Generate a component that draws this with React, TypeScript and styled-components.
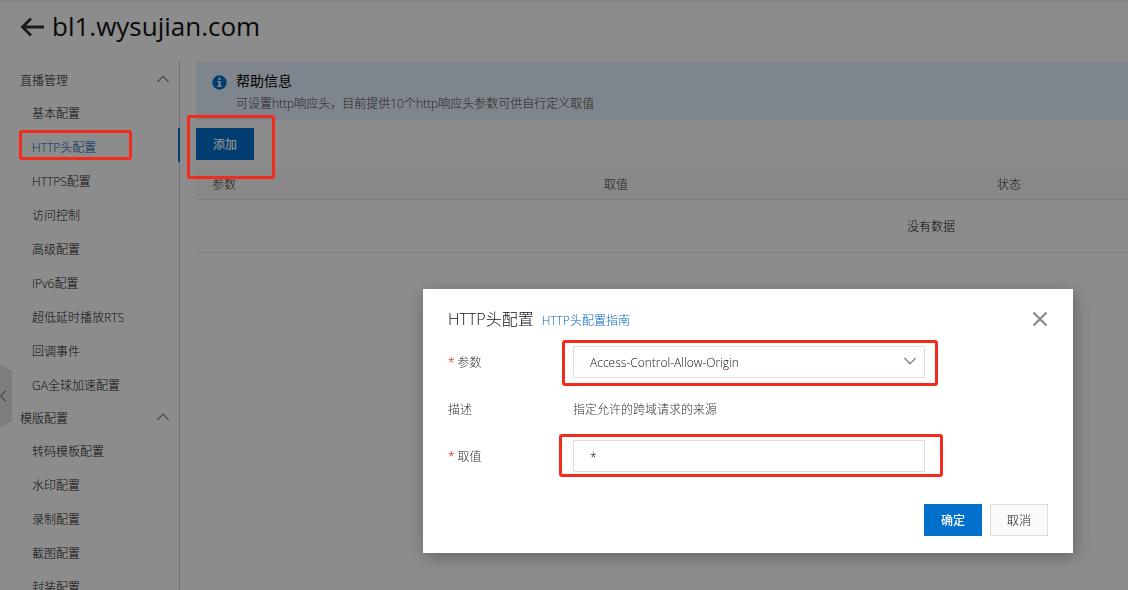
import React from "react";
import styled, { createGlobalStyle, css } from "styled-components";

const GlobalStyle = createGlobalStyle`
  * { box-sizing: border-box; }
  body {
    margin: 0;
    background: #fff;
    color: #111;
    font-family: "Open Sans", "Noto Sans CJK SC", sans-serif;
    font-size: 12px;
    font-weight: 300;
    line-height: 20px;
    overflow: hidden;
  }
  button, input, select { font: inherit; color: inherit; }
`;

const Page = styled.div`
  display: flex;
  flex-direction: column;
  min-height: 100vh;
  border-top: 2px solid #f2f2f2;
`;

const PageHeader = styled.header`
  display: flex;
  align-items: center;
  gap: 8px;
  height: 60px;
  padding: 0 20px 12px;
`;

const BackButton = styled.button`
  display: flex;
  padding: 2px 0 0;
  border: 0;
  background: none;
  color: #333;
`;

const PageTitle = styled.h1`
  margin: 0;
  color: #111;
  font-size: 26px;
  font-weight: 400;
  line-height: 40px;
`;

const Body = styled.div`
  display: flex;
  flex: 1;
`;

const Sidebar = styled.nav`
  flex: 0 0 180px;
  height: calc(100vh - 62px);
  overflow: clip;
  box-shadow: inset -1px 0 #ccc;
`;

const MenuList = styled.ul`
  margin: 0;
  padding: 0;
  list-style: none;
`;

const GroupToggle = styled.button`
  display: flex;
  align-items: center;
  justify-content: space-between;
  width: 100%;
  height: 32px;
  padding: 6px 10px 0 20px;
  border: 0;
  background: none;
  text-align: left;
`;

const MenuItem = styled.li<{ $active?: boolean }>`
  height: 34px;
  padding: 5px 0 0 32px;
  border-right: 2px solid ${(p) => (p.$active ? "#0070cc" : "transparent")};
`;

const MenuLink = styled.a<{ $active?: boolean }>`
  position: relative;
  display: inline-block;
  color: ${(p) => (p.$active ? "#0058b8" : "#111")};
  line-height: 30px;
  text-decoration: none;
`;

const Main = styled.main`
  flex: 1;
  min-width: 0;
  overflow: hidden;
  padding-left: 16px;
`;

const Notice = styled.section`
  display: flex;
  gap: 9px;
  padding: 8px 16px 4px;
  background: #e7f2ff;
  color: #444;
`;

const NoticeIcon = styled.svg`
  flex: none;
  margin-top: 5px;
`;

const NoticeTitle = styled.h2`
  margin: 0;
  color: #000;
  font-size: 14px;
  font-weight: 400;
  line-height: 22px;
`;

const NoticeText = styled.p`
  margin: 0;
  line-height: 24px;
`;

const Toolbar = styled.div`
  display: flex;
  padding: 8px 0;
`;

const Anchor = styled.div`
  position: relative;
  display: flex;
`;

const Button = styled.button<{ $primary?: boolean }>`
  width: 58px;
  height: 32px;
  padding: 2px 0 0;
  border: 1px solid #dedede;
  background: #fafafa;
  ${(p) =>
    p.$primary &&
    css`
      border-color: #0070cc;
      background: #0070cc;
      color: #fff;
      font-weight: 500;
    `}
`;

const Table = styled.table`
  min-width: 1470px;
  border-collapse: separate;
  border-spacing: 0;
  table-layout: fixed;
`;

const HeadCell = styled.th<{ $width?: number }>`
  width: ${(p) => (p.$width ? `${p.$width}px` : "auto")};
  height: 32px;
  padding: 2px 16px 0;
  border-bottom: 1px solid #e5e5e5;
  background: #f8f8f8;
  color: #333;
  font-weight: 300;
  text-align: left;
`;

const EmptyCell = styled.td`
  height: 53px;
  padding: 2px 0 0;
  border-bottom: 1px solid #e5e5e5;
  text-align: center;
`;

const CollapseHandle = styled.button`
  position: fixed;
  top: 365px;
  left: 0;
  display: flex;
  padding: 0;
  border: 0;
  background: none;
`;

const Backdrop = styled.div`
  position: fixed;
  inset: 0;
  z-index: 10;
  display: flex;
  align-items: flex-start;
  justify-content: flex-end;
  padding: 289px 55px 0 0;
  background: rgba(0, 0, 0, 0.45);
`;

const Dialog = styled.div`
  width: 650px;
  max-width: 100%;
  padding: 18px 25px 17px;
  background: #fff;
  box-shadow: 2px 4px 16px rgba(0, 0, 0, 0.3);
`;

const DialogHeader = styled.div`
  display: flex;
  align-items: center;
  gap: 8px;
  height: 24px;
  margin-bottom: 15px;
`;

const DialogTitle = styled.h2`
  margin: 0;
  font-size: 16px;
  font-weight: 300;
  line-height: 24px;
`;

const GuideLink = styled.a`
  padding-top: 4px;
  color: #0064c0;
  text-decoration: none;
`;

const CloseButton = styled.button`
  display: flex;
  margin-left: auto;
  padding: 0;
  border: 0;
  background: none;
  color: #888;
`;

const Field = styled.div<{ $tall?: boolean }>`
  display: grid;
  grid-template-columns: 125px minmax(0, 352px);
  align-items: center;
  height: ${(p) => (p.$tall ? 62 : 32)}px;
  color: #333;
`;

const FieldText = styled.span`
  padding-top: 2px;
`;

const FieldLabel = styled.label`
  padding-top: 2px;
`;

const Required = styled.span`
  margin-right: 3px;
  color: #d91010;
`;

const controlStyle = css`
  width: 100%;
  height: 32px;
  padding: 2px 16px 0;
  border: 1px solid #dedede;
  border-radius: 0;
  background: #fff;
  color: #111;
  outline: 0;
`;

const Select = styled.select`
  ${controlStyle}
  appearance: none;
`;

const Input = styled.input`
  ${controlStyle}
`;

const SelectArrow = styled.span`
  position: absolute;
  top: 11px;
  right: 8px;
  display: flex;
  color: #888;
  pointer-events: none;
`;

const DialogFooter = styled.div`
  display: flex;
  justify-content: flex-end;
  gap: 8px;
  margin-top: 32px;
`;

const Highlight = styled.span<{ $inset: string }>`
  position: absolute;
  inset: ${(p) => p.$inset};
  z-index: 30;
  border: 3px solid #f32b1d;
  border-radius: 3px;
  pointer-events: none;
`;

function Chevron({ up }: { up?: boolean }) {
  return (
    <svg width="14" height="8" viewBox="0 0 14 8" fill="none" stroke="currentColor" strokeWidth="1.6">
      <path d={up ? "M1.300 7 7 1.300l5.700 5.700" : "M1.300 1l5.700 5.700L12.700 1"} />
    </svg>
  );
}

const GroupArrow = styled.span`
  display: flex;
  padding-bottom: 4px;
  color: #999;
`;

const groups = [
  {
    name: "直播管理",
    items: [
      "基本配置",
      "HTTP头配置",
      "HTTPS配置",
      "访问控制",
      "高级配置",
      "IPv6配置",
      "超低延时播放RTS",
      "回调事件",
      "GA全球加速配置",
    ],
  },
  {
    name: "模版配置",
    items: ["转码模板配置", "水印配置", "录制配置", "截图配置", "封装配置"],
  },
];

const activeItem = "HTTP头配置";

export default function App() {
  return (
    <>
      <GlobalStyle />
      <Page>
        <PageHeader>
          <BackButton aria-label="返回">
            <svg width="24" height="20" viewBox="0 0 24 20" fill="none" stroke="currentColor" strokeWidth="2.8">
              <path d="M3 10h21M11 1.500 2.500 10l8.500 8.500" />
            </svg>
          </BackButton>
          <PageTitle>bl1.wysujian.com</PageTitle>
        </PageHeader>
        <Body>
          <Sidebar>
            {groups.map((group) => (
              <React.Fragment key={group.name}>
                <GroupToggle aria-expanded="true">
                  {group.name}
                  <GroupArrow>
                    <Chevron up />
                  </GroupArrow>
                </GroupToggle>
                <MenuList>
                  {group.items.map((item) => {
                    const active = item === activeItem;
                    return (
                      <MenuItem key={item} $active={active}>
                        <MenuLink href="#" $active={active}>
                          {item}
                          {active && <Highlight $inset="-3px -36px 3px -13px" />}
                        </MenuLink>
                      </MenuItem>
                    );
                  })}
                </MenuList>
              </React.Fragment>
            ))}
          </Sidebar>
          <Main>
            <Notice>
              <NoticeIcon width="15" height="15" viewBox="0 0 15 15">
                <circle cx="7.5" cy="7.5" r="7.2" fill="#0070cc" />
                <path d="M6.4 2.8h2.2V5H6.4zM5.4 6.1h3.2v4.5h1.1v1.3H5.3v-1.3h1.2V7.4H5.4z" fill="#e7f2ff" />
              </NoticeIcon>
              <div>
                <NoticeTitle>帮助信息</NoticeTitle>
                <NoticeText>可设置http响应头，目前提供10个http响应头参数可供自行定义取值</NoticeText>
              </div>
            </Notice>
            <Toolbar>
              <Anchor>
                <Button $primary>添加</Button>
                <Highlight $inset="-13px -21px -19px -9px" />
              </Anchor>
            </Toolbar>
            <Table>
              <thead>
                <tr>
                  <HeadCell $width={392}>参数</HeadCell>
                  <HeadCell $width={393}>取值</HeadCell>
                  <HeadCell $width={393}>状态</HeadCell>
                  <HeadCell />
                </tr>
              </thead>
              <tbody>
                <tr>
                  <EmptyCell colSpan={4}>没有数据</EmptyCell>
                </tr>
              </tbody>
            </Table>
          </Main>
        </Body>
        <CollapseHandle aria-label="收起菜单">
          <svg width="12" height="62" viewBox="0 0 12 62" fill="none">
            <path d="M0 0l12 6v50L0 62z" fill="#e4e4e4" />
            <path d="M6 25.500 0.500 31 6 36.500" stroke="#999" strokeWidth="1.500" />
          </svg>
        </CollapseHandle>
      </Page>
      <Backdrop>
        <Dialog role="dialog" aria-modal="true" aria-labelledby="dialog-title">
          <DialogHeader>
            <DialogTitle id="dialog-title">HTTP头配置</DialogTitle>
            <GuideLink href="#">HTTP头配置指南</GuideLink>
            <CloseButton aria-label="关闭">
              <svg width="16" height="16" viewBox="0 0 16 16" stroke="currentColor" strokeWidth="2.200">
                <path d="M1.500 1.500l13 13M14.500 1.500l-13 13" />
              </svg>
            </CloseButton>
          </DialogHeader>
          <Field>
            <FieldLabel htmlFor="param">
              <Required>*</Required>参数
            </FieldLabel>
            <Anchor>
              <Select id="param" defaultValue="Access-Control-Allow-Origin">
                <option>Access-Control-Allow-Origin</option>
              </Select>
              <SelectArrow>
                <Chevron />
              </SelectArrow>
              <Highlight $inset="-6px -13px -8px -11px" />
            </Anchor>
          </Field>
          <Field $tall>
            <FieldText>描述</FieldText>
            <FieldText>指定允许的跨域请求的来源</FieldText>
          </Field>
          <Field>
            <FieldLabel htmlFor="value">
              <Required>*</Required>取值
            </FieldLabel>
            <Anchor>
              <Input id="value" defaultValue="*" />
              <Highlight $inset="-6px -18px -5px -14px" />
            </Anchor>
          </Field>
          <DialogFooter>
            <Button $primary>确定</Button>
            <Button>取消</Button>
          </DialogFooter>
        </Dialog>
      </Backdrop>
    </>
  );
}
